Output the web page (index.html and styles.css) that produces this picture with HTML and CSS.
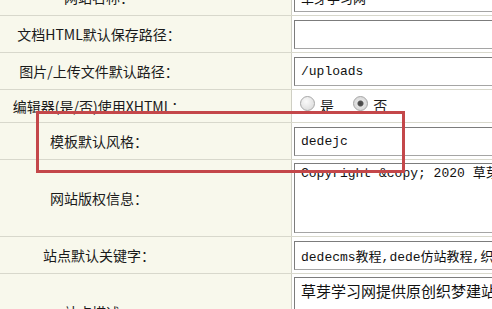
FILE: index.html
```html
<!DOCTYPE html>
<html lang="zh-CN">
<head>
    <meta charset="UTF-8">
    <title>系统基本参数</title>
    <link rel="stylesheet" href="styles.css">
</head>
<body>
    <div class="wrap">
        <table class="config">
            <tr>
                <td class="label">网站名称：</td>
                <td class="field"><input class="text" type="text" value="草芽学习网"></td>
            </tr>
            <tr>
                <td class="label">文档HTML默认保存路径：</td>
                <td class="field"><input class="text" type="text" value=""></td>
            </tr>
            <tr>
                <td class="label">图片/上传文件默认路径：</td>
                <td class="field"><input class="text" type="text" value="/uploads"></td>
            </tr>
            <tr class="short">
                <td class="label">编辑器(是/否)使用XHTML：</td>
                <td class="field">
                    <label class="opt"><input type="radio" name="xhtml"> 是</label>
                    <label class="opt"><input type="radio" name="xhtml" checked> 否</label>
                </td>
            </tr>
            <tr>
                <td class="label">模板默认风格：</td>
                <td class="field"><input class="text" type="text" value="dedejc"></td>
            </tr>
            <tr class="tall">
                <td class="label">网站版权信息：</td>
                <td class="field"><textarea class="area" wrap="off">Copyright &amp;copy; 2020 草芽学习网 版权所有</textarea></td>
            </tr>
            <tr>
                <td class="label">站点默认关键字：</td>
                <td class="field"><input class="text" type="text" value="dedecms教程,dede仿站教程,织梦模板"></td>
            </tr>
            <tr class="tall">
                <td class="label">站点描述：</td>
                <td class="field"><textarea class="area area-cn" wrap="off">草芽学习网提供原创织梦建站教程</textarea></td>
            </tr>
        </table>
        <!-- annotation box drawn over the screenshot -->
        <div class="mark"></div>
    </div>
</body>
</html>
```

FILE: styles.css
```css
body {
    margin: 0;
    overflow: hidden;
    background: #fff;
    font-family: "Noto Sans CJK SC", "DejaVu Sans", sans-serif;
    font-size: 14px;
    color: #1a1a1a;
}

.wrap {
    position: relative;
    margin-top: -21px;
}

.config {
    border-collapse: collapse;
    width: 620px;
}

.config td {
    height: 36px;
    padding: 0;
    border-bottom: 1px solid #d8d8cc;
    vertical-align: middle;
}

.config .short td {
    height: 32px;
}

.config .tall td {
    height: 76px;
}

.label {
    width: 198px;
    padding-right: 93px !important;
    text-align: center;
    background: #f8f8ec;
    border-right: 1px solid #cfcfc4;
    white-space: nowrap;
}

.field {
    padding-left: 2px !important;
    background: #fff;
}

.text {
    box-sizing: border-box;
    width: 300px;
    height: 29px;
    margin: 0;
    padding: 0 6px;
    border: 1px solid #a5a5a5;
    border-top-color: #7c7c7c;
    border-left-color: #7c7c7c;
    font-family: "Liberation Mono", "Noto Sans CJK SC", monospace;
    font-size: 13px;
    color: #111;
    background: #fff;
}

.area {
    box-sizing: border-box;
    display: block;
    width: 300px;
    height: 70px;
    margin: 0;
    padding: 2px 6px 0;
    border: 1px solid #a5a5a5;
    border-top-color: #7c7c7c;
    border-left-color: #7c7c7c;
    font-family: "Liberation Mono", "Noto Sans CJK SC", monospace;
    font-size: 13px;
    line-height: 16px;
    color: #111;
    white-space: pre;
    resize: none;
    overflow: hidden;
}

.area-cn {
    padding-top: 4px;
    font-family: "Noto Sans CJK SC", sans-serif;
    font-size: 15px;
    line-height: 18px;
}

.opt {
    display: inline-flex;
    align-items: center;
    margin-left: 6px;
    margin-right: 10px;
}

.opt input {
    appearance: none;
    width: 15px;
    height: 15px;
    margin: 0 5px 0 0;
    border: 1px solid #a8a8a8;
    border-radius: 50%;
    background: radial-gradient(circle at 40% 35%, #fafafa, #d6d6d6);
    position: relative;
    top: -2px;
}

.opt input:checked {
    background: radial-gradient(circle, #444 0, #555 2.5px, #e4e4e4 3.5px, #d0d0d0);
}

.mark {
    position: absolute;
    left: 36px;
    top: 132px;
    width: 363px;
    height: 56px;
    border: 3px solid #c4474a;
}
```
